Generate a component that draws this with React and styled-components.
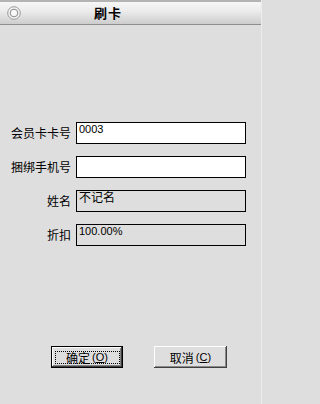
import React from "react";
import styled, { createGlobalStyle } from "styled-components";

const Global = createGlobalStyle`
  html, body { margin: 0; padding: 0; background: #dedede; }
  body { font-family: "Noto Sans CJK SC", "Liberation Sans", sans-serif; }
`;

const Window = styled.div`
  width: 262px;
  height: 404px;
  background: #dedede;
  display: flex;
  flex-direction: column;
  box-sizing: border-box;
  border-right: 1px solid #ececec;
`;

const TitleBar = styled.div`
  height: 22px;
  border-top: 2px solid #b4b4b4;
  border-bottom: 1px solid #8e8e8e;
  background: linear-gradient(#f7f7f7 0%, #ececec 40%, #cdcdcd 100%);
  display: flex;
  align-items: center;
  flex-shrink: 0;
`;

const CloseIcon = styled.svg`
  width: 14px;
  height: 14px;
  margin-left: 7px;
  flex-shrink: 0;
`;

const Title = styled.div`
  margin-left: 73px;
  font-size: 13px;
  font-weight: bold;
  letter-spacing: 1px;
  color: #000;
  line-height: 14px;
`;

const Body = styled.div`
  padding-top: 97px;
  display: flex;
  flex-direction: column;
  flex: 1;
`;

const Form = styled.div`
  display: flex;
  flex-direction: column;
  gap: 12px;
`;

const Row = styled.div`
  display: flex;
  align-items: center;
  height: 22px;
`;

const Label = styled.div`
  width: 71px;
  text-align: right;
  font-size: 12px;
  color: #000;
  line-height: 22px;
  margin-right: 5px;
`;

const Field = styled.div`
  width: 170px;
  height: 22px;
  box-sizing: border-box;
  border: 1px solid #000;
  background: ${(p) => (p.$readOnly ? "#dedede" : "#ffffff")};
  font-family: "Liberation Sans", "Noto Sans CJK SC", sans-serif;
  font-size: ${(p) => (p.$cjk ? "12px" : "11px")};
  color: #000;
  padding: 0 0 0 2px;
  line-height: ${(p) => (p.$cjk ? "14px" : "13px")};
  white-space: nowrap;
`;

const Buttons = styled.div`
  margin-top: 100px;
  display: flex;
  padding-left: 51px;
  gap: 31px;
`;

const Button = styled.div`
  width: ${(p) => p.$w}px;
  height: 22px;
  box-sizing: border-box;
  background: #dedede;
  display: flex;
  align-items: center;
  justify-content: center;
  font-size: 12px;
  color: #000;
  border: ${(p) => (p.$default ? "1px solid #000" : "none")};
  box-shadow: ${(p) =>
    p.$default
      ? "inset -1px -1px 0 #404040, inset 1px 1px 0 #ffffff, inset -2px -2px 0 #808080"
      : "inset -1px -1px 0 #404040, inset 1px 1px 0 #ffffff, inset -2px -2px 0 #8a8a8a"};
`;

const Focus = styled.div`
  width: 63px;
  height: 11px;
  border: 1px dotted #000;
  display: flex;
  align-items: center;
  justify-content: center;
  line-height: 11px;
`;

const Key = styled.span`
  font-family: "Liberation Sans", sans-serif;
  font-size: 11px;
  margin-left: 2px;
`;

export default function App() {
  return (
    <>
      <Global />
      <Window>
        <TitleBar>
          <CloseIcon viewBox="0 0 14 14">
            <circle cx="7" cy="7" r="6.3" fill="#f2f2f2" stroke="#9a9a9a" strokeWidth="1" />
            <circle cx="7" cy="7" r="3.8" fill="#f8f8f8" stroke="#8a8a8a" strokeWidth="1" />
          </CloseIcon>
          <Title>刷卡</Title>
        </TitleBar>
        <Body>
          <Form>
            <Row>
              <Label>会员卡卡号</Label>
              <Field>0003</Field>
            </Row>
            <Row>
              <Label>捆绑手机号</Label>
              <Field />
            </Row>
            <Row>
              <Label>姓名</Label>
              <Field $readOnly $cjk>不记名</Field>
            </Row>
            <Row>
              <Label>折扣</Label>
              <Field $readOnly>100.00%</Field>
            </Row>
          </Form>
          <Buttons>
            <Button $default $w={72}>
              <Focus>
                确定<Key>(<u>O</u>)</Key>
              </Focus>
            </Button>
            <Button $w={73}>
              取消<Key>(<u>C</u>)</Key>
            </Button>
          </Buttons>
        </Body>
      </Window>
    </>
  );
}
